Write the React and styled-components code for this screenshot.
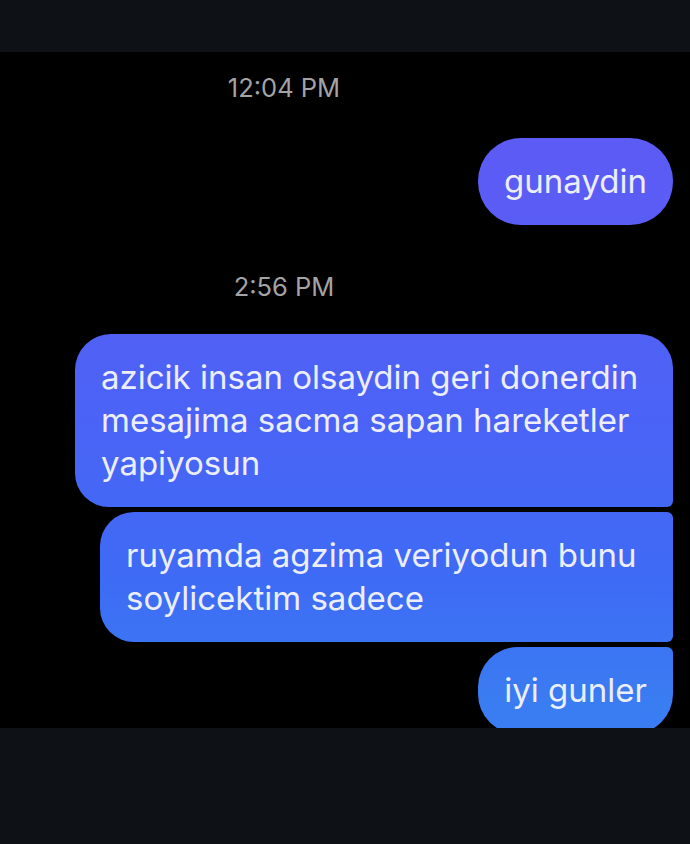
import React from "react";
import styled, { createGlobalStyle } from "styled-components";

const GlobalStyle = createGlobalStyle`
    html, body {
        margin: 0;
        padding: 0;
        background: #0e1116;
    }
    * {
        box-sizing: border-box;
    }
`;

const Screen = styled.div`
    display: flex;
    flex-direction: column;
    width: 690px;
    height: 844px;
    background-color: #0e1116;
    font-family: Inter, "Liberation Sans", Arial, sans-serif;
`;

const Bar = styled.div`
    height: ${(p) => (p.$height ? `${p.$height}px` : "auto")};
    flex: ${(p) => (p.$height ? "none" : 1)};
    background-color: #0e1116;
`;

const Thread = styled.div`
    display: flex;
    flex-direction: column;
    height: 676px;
    overflow: hidden;
    background-color: #000;
    padding: 0 17px 0 0;
`;

const Timestamp = styled.div`
    width: 568px;
    text-align: center;
    color: #a3a3a6;
    font-size: 25.5px;
    line-height: 28px;
    margin-top: ${(p) => p.$top}px;
    margin-bottom: ${(p) => p.$bottom}px;
`;

const Row = styled.div`
    display: flex;
    justify-content: flex-end;
    margin-bottom: 5px;
`;

// bubble gradient is pinned to the viewport, so colour shifts with position
const Bubble = styled.div`
    max-width: ${(p) => p.$max || 600}px;
    padding: 22px 26px;
    font-size: 33px;
    line-height: 43px;
    color: #eceefc;
    background: linear-gradient(
            180deg,
            #5d5bf5 120px,
            #5a5df5 220px,
            #4a63f6 420px,
            #3e6bf5 580px,
            #3a7cf1 700px
        )
        fixed;
    border-radius: ${(p) => p.$radius};
`;

export default function App() {
    return (
        <>
            <GlobalStyle />
            <Screen>
                <Bar $height={52} />
                <Thread>
                    <Timestamp $top={22} $bottom={36}>12:04 PM</Timestamp>
                    <Row>
                        <Bubble $radius="43px">gunaydin</Bubble>
                    </Row>
                    <Timestamp $top={43} $bottom={33}>2:56 PM</Timestamp>
                    <Row>
                        <Bubble $max={598} $radius="36px 34px 6px 34px">
                            azicik insan olsaydin geri donerdin mesajima sacma sapan hareketler yapiyosun
                        </Bubble>
                    </Row>
                    <Row>
                        <Bubble $max={573} $radius="34px 6px 6px 34px">
                            ruyamda agzima veriyodun bunu soylicektim sadece
                        </Bubble>
                    </Row>
                    <Row>
                        <Bubble $radius="40px 6px 40px 40px">iyi gunler</Bubble>
                    </Row>
                </Thread>
                <Bar />
            </Screen>
        </>
    );
}
